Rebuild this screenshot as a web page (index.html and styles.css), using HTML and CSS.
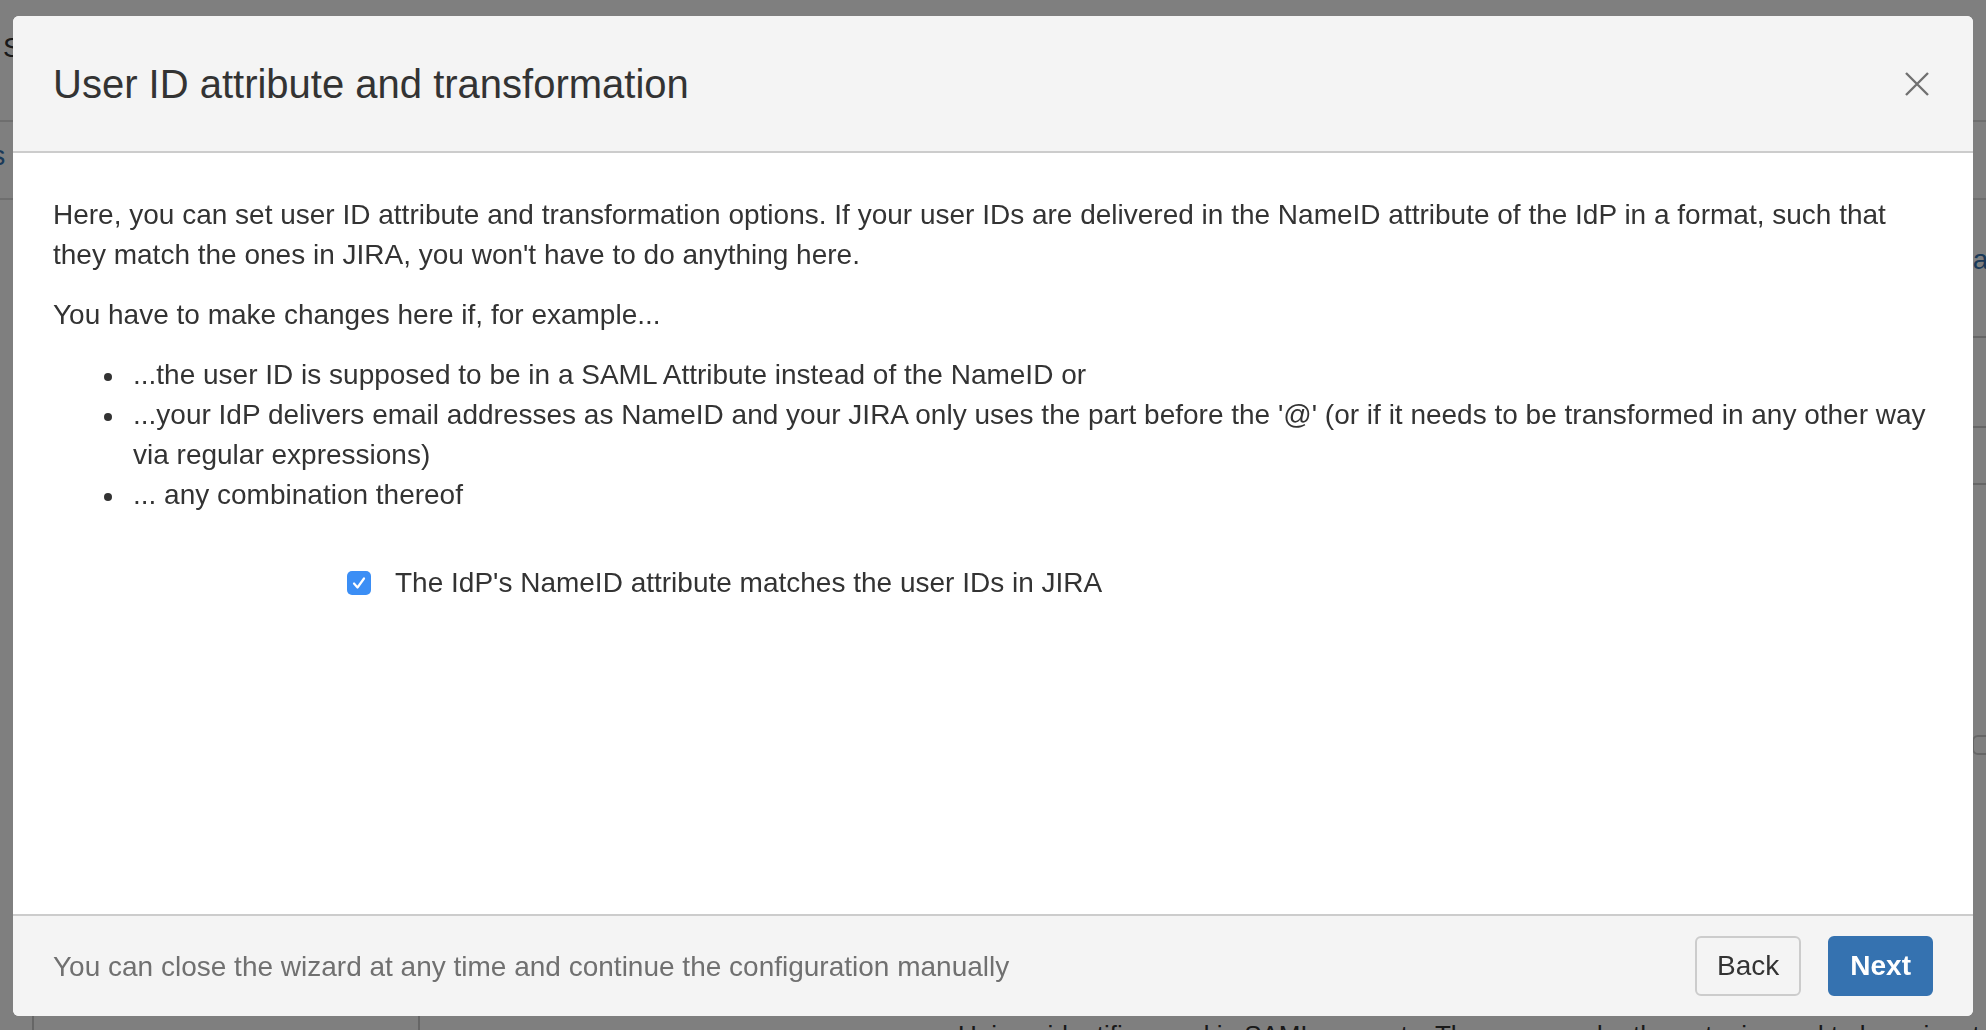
FILE: index.html
```html
<!DOCTYPE html>
<html lang="en">
<head>
    <meta charset="UTF-8">
    <title>SAML SSO - User ID attribute and transformation</title>
    <link rel="stylesheet" href="styles.css">
</head>
<body>
    <div class="page">
        <header class="page-header">
            <h1>SAML Single Sign On</h1>
        </header>
        <nav class="page-nav">
            <a href="#">Settings</a>
        </nav>
        <div class="page-main">
            <aside class="sidebar"></aside>
            <div class="content">
                <div class="content-links">
                    <a href="#">Format</a>
                </div>
                <div class="row"></div>
                <div class="row short"></div>
                <div class="row last">
                    <span class="pill"></span>
                </div>
                <p class="hint">Unique identifier used in SAML requests. The name under the entry is used to keep input this</p>
            </div>
        </div>
    </div>

    <div class="blanket"></div>

    <section class="dialog" role="dialog">
        <header class="dialog-header">
            <h2>User ID attribute and transformation</h2>
            <button class="close" aria-label="Close">
                <svg width="24" height="24" viewBox="0 0 24 24">
                    <path d="M1 1 L23 23 M23 1 L1 23" stroke="#707070" stroke-width="2.4" fill="none"/>
                </svg>
            </button>
        </header>
        <div class="dialog-body">
            <p>Here, you can set user ID attribute and transformation options. If your user IDs are delivered in the NameID attribute of the IdP in a format, such that they match the ones in JIRA, you won't have to do anything here.</p>
            <p>You have to make changes here if, for example...</p>
            <ul>
                <li>...the user ID is supposed to be in a SAML Attribute instead of the NameID or</li>
                <li>...your IdP delivers email addresses as NameID and your JIRA only uses the part before the '@' (or if it needs to be transformed in any other way via regular expressions)</li>
                <li>... any combination thereof</li>
            </ul>
            <form class="options">
                <label class="checkbox">
                    <span class="box">
                        <svg width="24" height="24" viewBox="0 0 24 24">
                            <path d="M7 12.5 L10.5 16.5 L17 7.5" stroke="#fff" stroke-width="2.2" fill="none" stroke-linecap="round" stroke-linejoin="round"/>
                        </svg>
                    </span>
                    The IdP's NameID attribute matches the user IDs in JIRA
                </label>
            </form>
        </div>
        <footer class="dialog-footer">
            <p class="footer-hint">You can close the wizard at any time and continue the configuration manually</p>
            <div class="actions">
                <button class="button">Back</button>
                <button class="button primary">Next</button>
            </div>
        </footer>
    </section>
</body>
</html>
```

FILE: styles.css
```css
* {
    margin: 0;
    padding: 0;
    box-sizing: border-box;
}
body {
    font-family: "Liberation Sans", Arial, sans-serif;
    background-color: #fff;
    color: #333;
    font-size: 28px;
    line-height: 40px;
    overflow: hidden;
}
a {
    color: #3572b0;
    text-decoration: none;
}

/* page under the blanket */
.page {
    height: 1030px;
    overflow: hidden;
}
.page-header {
    height: 122px;
    padding: 28px 0 0 3px;
    border-bottom: 2px solid #ddd;
}
.page-header h1 {
    font-size: 28px;
    font-weight: normal;
    white-space: nowrap;
}
.page-nav {
    height: 78px;
    padding-top: 14px;
    border-bottom: 2px solid #ddd;
}
.page-nav a {
    margin-left: -96px;
}
.page-main {
    display: flex;
    height: 830px;
}
.sidebar {
    flex: 0 0 388px;
    margin-left: 32px;
    border-left: 2px solid #ccc;
    border-right: 2px solid #ccc;
}
.content {
    flex: 1;
    min-width: 0;
}
.content-links {
    height: 136px;
    padding-top: 40px;
    text-align: right;
    margin-right: -10px;
}
.row {
    height: 90px;
    border-top: 2px solid #ccc;
}
.row.short {
    height: 57px;
}
.row.last {
    height: 270px;
    padding-top: 250px;
    display: flex;
    justify-content: flex-end;
}
.pill {
    width: 60px;
    height: 20px;
    border: 2px solid #ccc;
    border-radius: 6px;
    margin-right: -46px;
}
.hint {
    padding: 262px 0 0 538px;
    font-size: 26px;
    white-space: nowrap;
}
.blanket {
    position: fixed;
    inset: 0;
    background-color: rgba(0, 0, 0, 0.5);
}

/* dialog */
.dialog {
    position: fixed;
    left: 13px;
    top: 16px;
    width: 1960px;
    height: 1000px;
    background-color: #fff;
    border-radius: 6px;
    overflow: hidden;
    display: flex;
    flex-direction: column;
}
.dialog-header {
    height: 137px;
    flex: 0 0 137px;
    background-color: #f4f4f4;
    border-bottom: 2px solid #ccc;
    padding: 0 40px;
    display: flex;
    align-items: center;
    justify-content: space-between;
}
.dialog-header h2 {
    font-size: 40px;
    font-weight: normal;
    line-height: 48px;
    color: #333;
}
.close {
    width: 32px;
    height: 32px;
    border: none;
    background: none;
    display: flex;
    align-items: center;
    justify-content: center;
    cursor: pointer;
}
.dialog-body {
    flex: 1;
    padding: 42px 40px 0;
}
.dialog-body p {
    margin-bottom: 20px;
}
.dialog-body ul {
    list-style: none;
    padding-left: 80px;
}
.dialog-body li {
    position: relative;
}
.dialog-body li::before {
    content: "";
    position: absolute;
    left: -29px;
    top: 18px;
    width: 8px;
    height: 8px;
    border-radius: 50%;
    background-color: #333;
}
.options {
    margin-top: 48px;
    padding-left: 294px;
}
.checkbox {
    display: flex;
    align-items: center;
    gap: 24px;
}
.box {
    width: 24px;
    height: 24px;
    border-radius: 5px;
    background-color: #3b8ef5;
    display: flex;
}
.dialog-footer {
    flex: 0 0 102px;
    background-color: #f4f4f4;
    border-top: 2px solid #ccc;
    padding: 20px 40px;
    display: flex;
    align-items: center;
    justify-content: space-between;
}
.footer-hint {
    color: #707070;
    padding-top: 2px;
}
.actions {
    display: flex;
    gap: 27px;
}
.button {
    height: 60px;
    padding: 0 20px;
    font-family: inherit;
    font-size: 28px;
    color: #333;
    background-color: #f4f4f4;
    border: 2px solid #ccc;
    border-radius: 6px;
    cursor: pointer;
}
.button.primary {
    background-color: #3572b0;
    border-color: #3572b0;
    color: #fff;
    font-weight: bold;
}
```
